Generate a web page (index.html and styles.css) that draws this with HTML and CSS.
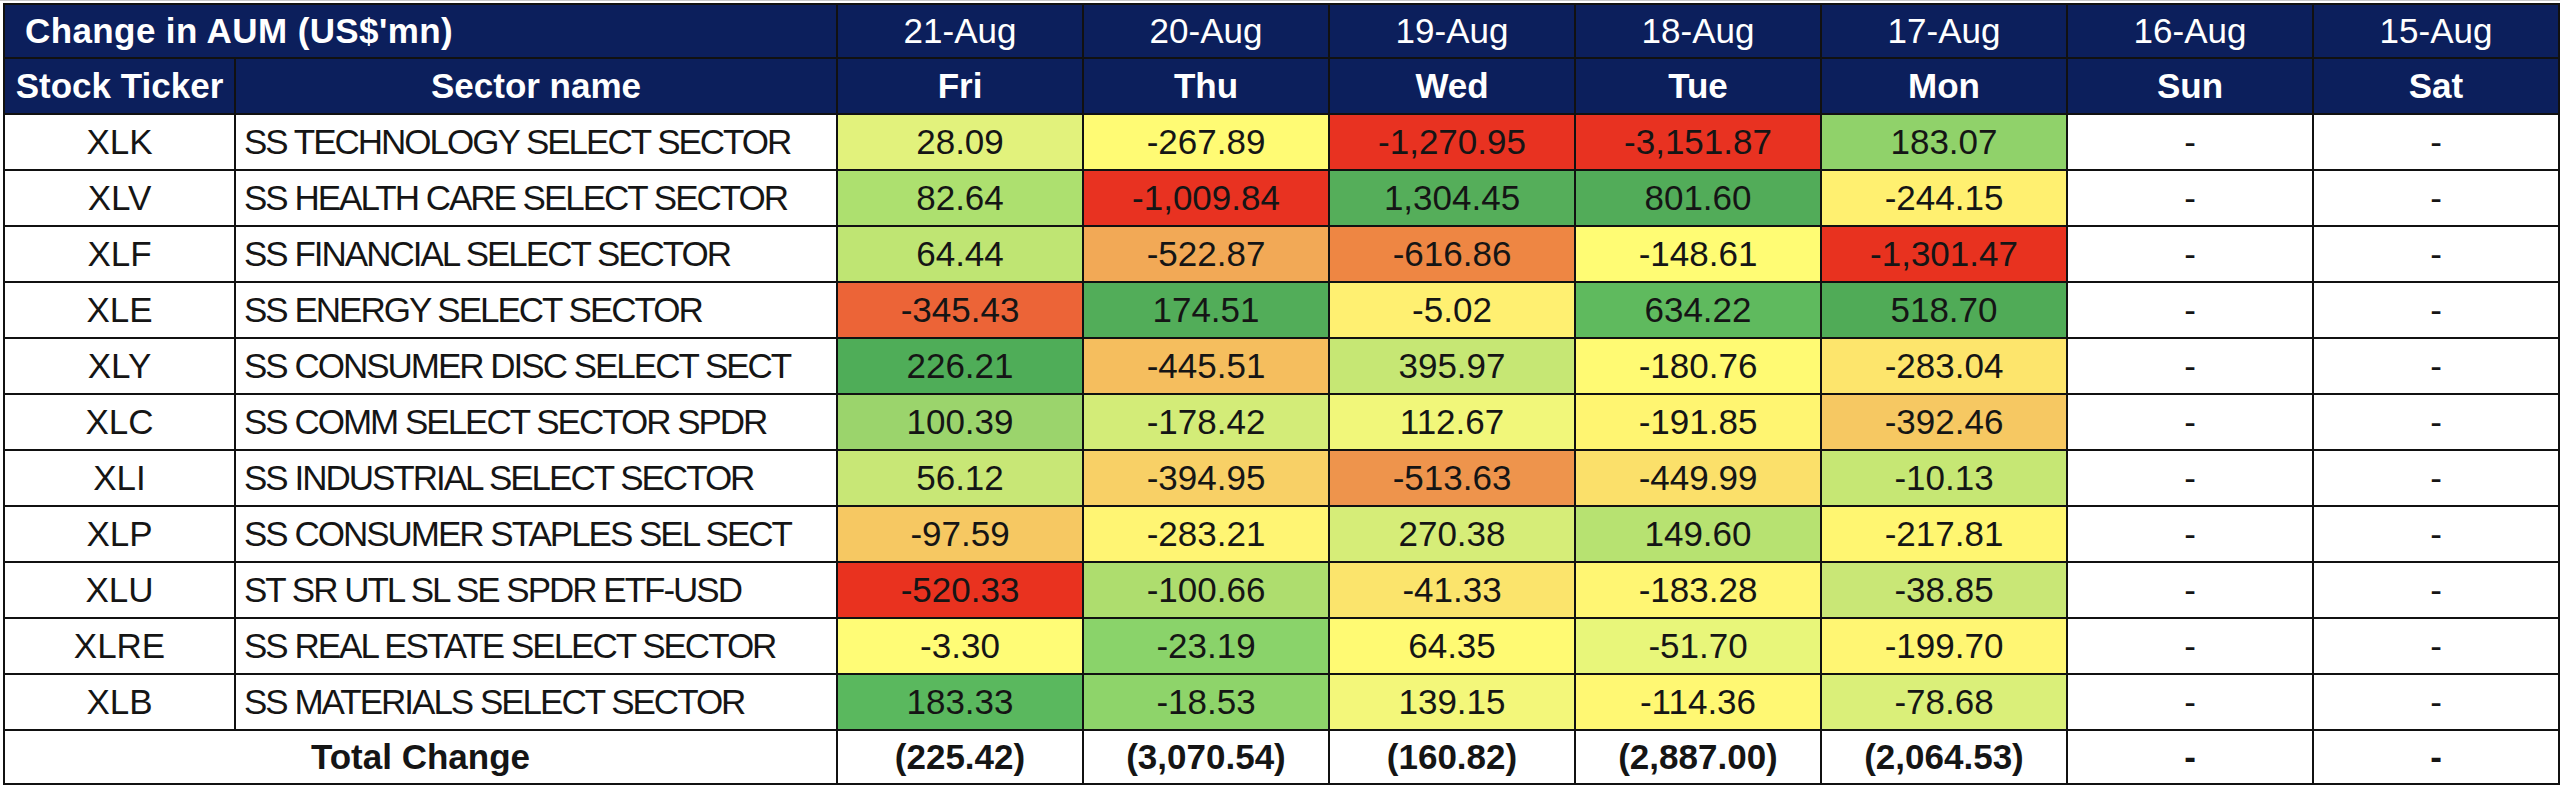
FILE: index.html
```html
<!DOCTYPE html>
<html lang="en">
<head>
<meta charset="utf-8">
<title>Change in AUM</title>
<link rel="stylesheet" href="styles.css">
</head>
<body>
<div class="sheet">
<table class="aum">
  <colgroup>
    <col class="col-ticker"><col class="col-sector">
    <col class="col-day"><col class="col-day"><col class="col-day"><col class="col-day"><col class="col-day"><col class="col-day"><col class="col-day">
  </colgroup>
  <thead>
    <tr class="row-dates">
      <th colspan="2" class="title">Change in AUM (US$'mn)</th>
      <th>21-Aug</th><th>20-Aug</th><th>19-Aug</th><th>18-Aug</th><th>17-Aug</th><th>16-Aug</th><th>15-Aug</th>
    </tr>
    <tr class="row-days">
      <th>Stock Ticker</th><th>Sector name</th>
      <th>Fri</th><th>Thu</th><th>Wed</th><th>Tue</th><th>Mon</th><th>Sun</th><th>Sat</th>
    </tr>
  </thead>
  <tbody>
    <tr>
      <td class="ticker">XLK</td><td class="sector">SS TECHNOLOGY SELECT SECTOR</td>
      <td style="background:#e2f27c">28.09</td><td style="background:#fffb74">-267.89</td><td style="background:#e83221">-1,270.95</td><td style="background:#e83221">-3,151.87</td><td style="background:#90d26a">183.07</td><td>-</td><td>-</td>
    </tr>
    <tr>
      <td class="ticker">XLV</td><td class="sector">SS HEALTH CARE SELECT SECTOR</td>
      <td style="background:#ade06f">82.64</td><td style="background:#e83221">-1,009.84</td><td style="background:#55ae5a">1,304.45</td><td style="background:#52ac59">801.60</td><td style="background:#fff070">-244.15</td><td>-</td><td>-</td>
    </tr>
    <tr>
      <td class="ticker">XLF</td><td class="sector">SS FINANCIAL SELECT SECTOR</td>
      <td style="background:#bfe573">64.44</td><td style="background:#f2a956">-522.87</td><td style="background:#ee8643">-616.86</td><td style="background:#fffc74">-148.61</td><td style="background:#e8321f">-1,301.47</td><td>-</td><td>-</td>
    </tr>
    <tr>
      <td class="ticker">XLE</td><td class="sector">SS ENERGY SELECT SECTOR</td>
      <td style="background:#ec6437">-345.43</td><td style="background:#52ad59">174.51</td><td style="background:#fff071">-5.02</td><td style="background:#5fba5e">634.22</td><td style="background:#50ab57">518.70</td><td>-</td><td>-</td>
    </tr>
    <tr>
      <td class="ticker">XLY</td><td class="sector">SS CONSUMER DISC SELECT SECT</td>
      <td style="background:#4fad58">226.21</td><td style="background:#f5be5e">-445.51</td><td style="background:#c6e774">395.97</td><td style="background:#fffa73">-180.76</td><td style="background:#fde56c">-283.04</td><td>-</td><td>-</td>
    </tr>
    <tr>
      <td class="ticker">XLC</td><td class="sector">SS COMM SELECT SECTOR SPDR</td>
      <td style="background:#9bd46c">100.39</td><td style="background:#d3ec78">-178.42</td><td style="background:#f1f77a">112.67</td><td style="background:#fff571">-191.85</td><td style="background:#f6c862">-392.46</td><td>-</td><td>-</td>
    </tr>
    <tr>
      <td class="ticker">XLI</td><td class="sector">SS INDUSTRIAL SELECT SECTOR</td>
      <td style="background:#c8e776">56.12</td><td style="background:#f8d066">-394.95</td><td style="background:#ee944c">-513.63</td><td style="background:#fbe06a">-449.99</td><td style="background:#c6e774">-10.13</td><td>-</td><td>-</td>
    </tr>
    <tr>
      <td class="ticker">XLP</td><td class="sector">SS CONSUMER STAPLES SEL SECT</td>
      <td style="background:#f6c862">-97.59</td><td style="background:#fff573">-283.21</td><td style="background:#d6ed78">270.38</td><td style="background:#b7e271">149.60</td><td style="background:#fff671">-217.81</td><td>-</td><td>-</td>
    </tr>
    <tr>
      <td class="ticker">XLU</td><td class="sector">ST SR UTL SL SE SPDR ETF-USD</td>
      <td style="background:#e9321f">-520.33</td><td style="background:#aedd6e">-100.66</td><td style="background:#fbe46c">-41.33</td><td style="background:#fff673">-183.28</td><td style="background:#c9e776">-38.85</td><td>-</td><td>-</td>
    </tr>
    <tr>
      <td class="ticker">XLRE</td><td class="sector">SS REAL ESTATE SELECT SECTOR</td>
      <td style="background:#fffc76">-3.30</td><td style="background:#8ad36a">-23.19</td><td style="background:#fffa73">64.35</td><td style="background:#e8f67a">-51.70</td><td style="background:#fff673">-199.70</td><td>-</td><td>-</td>
    </tr>
    <tr>
      <td class="ticker">XLB</td><td class="sector">SS MATERIALS SELECT SECTOR</td>
      <td style="background:#5ab85e">183.33</td><td style="background:#8ed46a">-18.53</td><td style="background:#f3f77a">139.15</td><td style="background:#fff873">-114.36</td><td style="background:#daef79">-78.68</td><td>-</td><td>-</td>
    </tr>
  </tbody>
  <tfoot>
    <tr>
      <td colspan="2">Total Change</td>
      <td>(225.42)</td><td>(3,070.54)</td><td>(160.82)</td><td>(2,887.00)</td><td>(2,064.53)</td><td>-</td><td>-</td>
    </tr>
  </tfoot>
</table>
</div>
</body>
</html>
```

FILE: styles.css
```css
html, body {
  margin: 0;
  padding: 0;
  background: #ffffff;
}

.sheet {
  padding: 2px 0 0 3px;
  border-top: 1px solid #c9c9c9;
}

.aum {
  border-collapse: collapse;
  table-layout: fixed;
  width: 2556px;
  font-family: "Liberation Sans", Arial, sans-serif;
  font-size: 35px;
  color: #151515;
}

.col-ticker { width: 231px; }
.col-sector { width: 602px; }
.col-day { width: 246px; }

.aum th,
.aum td {
  border: 2px solid #111111;
  padding: 0;
  text-align: center;
  vertical-align: middle;
  white-space: nowrap;
  overflow: hidden;
}

.aum thead th {
  background: #0c1f5c;
  color: #ffffff;
}

.row-dates th {
  height: 52px;
  font-weight: 400;
}

.row-dates th.title {
  font-weight: 700;
  text-align: left;
  padding-left: 20px;
  letter-spacing: 0.4px;
}

.row-days th {
  height: 54px;
  font-weight: 700;
}

.aum tbody td {
  height: 54px;
  background: #ffffff;
}

.aum tbody td.sector {
  text-align: left;
  padding-left: 8px;
  letter-spacing: -2px;
}

.aum tfoot td {
  height: 52px;
  font-weight: 700;
  background: #ffffff;
}
```
